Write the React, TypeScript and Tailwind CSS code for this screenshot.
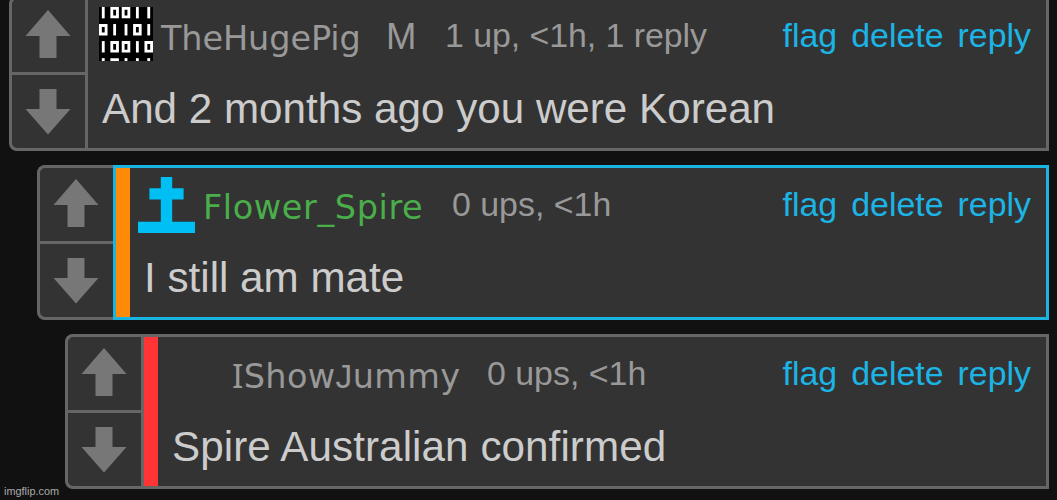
import type { ReactNode } from 'react';
import clsx from 'clsx';

type Comment = {
  id: string;
  icon: ReactNode;
  name: ReactNode;
  nameClass: string;
  badge?: string;
  meta: string;
  metaClass: string;
  text: string;
  textClass: string;
  indentClass: string;
  stripeClass?: string;
  highlighted?: boolean;
};

// rows of binary digits, as [digit, x] on a 19x19 grid
const BINARY_ROWS: [number, number][][] = [
  [[1, 1], [0, 4], [0, 8], [1, 13], [1, 17]],
  [[0, 0], [1, 5], [1, 9], [0, 12], [1, 17]],
  [[1, 1], [0, 4], [0, 8], [1, 13], [0, 16]],
  [[1, 1], [0, 4], [1, 9], [1, 13], [1, 17]],
];

function BinaryIcon() {
  return (
    <svg viewBox="0 0 19 19" className="mt-2 ml-[11px] h-[54px] w-[54px] shrink-0 bg-black">
      {BINARY_ROWS.map((row, i) =>
        row.map(([digit, x]) =>
          digit === 1 ? (
            <rect key={`${i}-${x}`} x={x} y={i * 6} width="1" height="4" fill="#fff" />
          ) : (
            <path
              key={`${i}-${x}`}
              d={`M${x} ${i * 6}h3v4h-3z M${x + 1} ${i * 6 + 1}v2h1v-2z`}
              fill="#fff"
              fillRule="evenodd"
            />
          ),
        ),
      )}
    </svg>
  );
}

function SpireIcon() {
  return (
    <svg viewBox="0 0 5 5" className="mt-[9px] ml-2 h-[56px] w-[57px] shrink-0" preserveAspectRatio="none">
      <path d="M2 0h1v1h1v1h-1v2h2v1h-5v-1h2v-2h-1v-1h1z" fill="#00bff3" />
    </svg>
  );
}

function VoteButtons() {
  return (
    <div className="flex w-[76px] shrink-0 flex-col rounded-l-lg border-y-3 border-l-3 border-[#666]">
      <button type="button" aria-label="Upvote" className="h-[76px] border-b-3 border-[#666]">
        <svg viewBox="0 0 73 73" className="h-[73px] w-[73px]">
          <path d="M36 11L58.5 37H44.5V59H27.5V37H13.5z" fill="#777" />
        </svg>
      </button>
      <button type="button" aria-label="Downvote" className="h-[73px]">
        <svg viewBox="0 0 73 73" className="h-[73px] w-[73px]">
          <path d="M27.5 14H44.5V34H58.5L36 59.5L13.5 34H27.5z" fill="#777" />
        </svg>
      </button>
    </div>
  );
}

function CommentCard({ comment }: { comment: Comment }) {
  return (
    <div className={clsx('mr-2 flex h-[155px] rounded-l-lg bg-[#333]', comment.indentClass)}>
      <VoteButtons />
      <div
        className={clsx(
          'flex min-w-0 flex-1 border-3',
          comment.highlighted ? 'border-[#1bb4e0]' : 'border-[#666]',
        )}
      >
        {comment.stripeClass ? <div className={clsx('w-[14px] shrink-0', comment.stripeClass)} /> : null}
        <div className="min-w-0 flex-1 whitespace-nowrap">
          <div className="flex h-[86px] items-start text-[33.9px] leading-10 text-[#999]">
            {comment.icon}
            <span className={clsx('mt-5 shrink-0 font-["DejaVu_Sans",sans-serif] text-[33.5px]', comment.nameClass)}>
              {comment.name}
            </span>
            {comment.badge ? (
              <span className="mt-[18px] -mr-[59px] w-[59px] text-[36.5px]">{comment.badge}</span>
            ) : null}
            <span className={clsx('mt-4', comment.metaClass)}>{comment.meta}</span>
            <span className="mt-4 mr-[15px] ml-auto flex gap-[14px] text-[#1cb4e4]">
              <a>flag</a>
              <a>delete</a>
              <a>reply</a>
            </span>
          </div>
          <p className={clsx('text-[42.2px] leading-12 text-[#ccc]', comment.textClass)}>{comment.text}</p>
        </div>
      </div>
    </div>
  );
}

const comments: Comment[] = [
  {
    id: 'pig',
    icon: <BinaryIcon />,
    name: 'TheHugePig',
    nameClass: 'ml-2 w-[225px] tracking-[-0.1px]',
    badge: 'M',
    meta: '1 up, <1h, 1 reply',
    metaClass: 'ml-[59px] tracking-[-0.05px]',
    text: 'And 2 months ago you were Korean',
    textClass: 'ml-[14px]',
    indentClass: 'ml-[9px]',
  },
  {
    id: 'spire',
    icon: <SpireIcon />,
    name: 'Flower_Spire',
    nameClass: 'ml-2 w-[249px] tracking-[0.6px] text-[#4aae4a]',
    meta: '0 ups, <1h',
    metaClass: '',
    text: 'I still am mate',
    textClass: 'ml-[14px]',
    indentClass: 'ml-[37px]',
    stripeClass: 'bg-[#ff8a05]',
    highlighted: true,
  },
  {
    id: 'jummy',
    icon: <div className="w-[65px] shrink-0" />,
    name: (
      <>
        <span className="font-['Noto_Sans',sans-serif] leading-none">I</span>Show
        <span className="font-['Liberation_Sans',sans-serif] leading-none">J</span>ummy
      </>
    ),
    nameClass: 'ml-[9px] w-[255px] tracking-[0.35px]',
    meta: '0 ups, <1h',
    metaClass: '',
    text: 'Spire Australian confirmed',
    textClass: 'ml-[14px] tracking-[0.07px]',
    indentClass: 'ml-[65px]',
    stripeClass: 'bg-[#ff3535]',
  },
];

export default function App() {
  return (
    <div className="relative h-[500px] w-[1057px] overflow-hidden bg-[#111] font-['Liberation_Sans',sans-serif]">
      <div className="-mt-1 flex flex-col gap-[14px]">
        {comments.map((comment) => (
          <CommentCard key={comment.id} comment={comment} />
        ))}
      </div>
      <span className="absolute bottom-[2px] left-1 text-[10.9px] leading-[13px] text-[#aaa]">imgflip.com</span>
    </div>
  );
}
